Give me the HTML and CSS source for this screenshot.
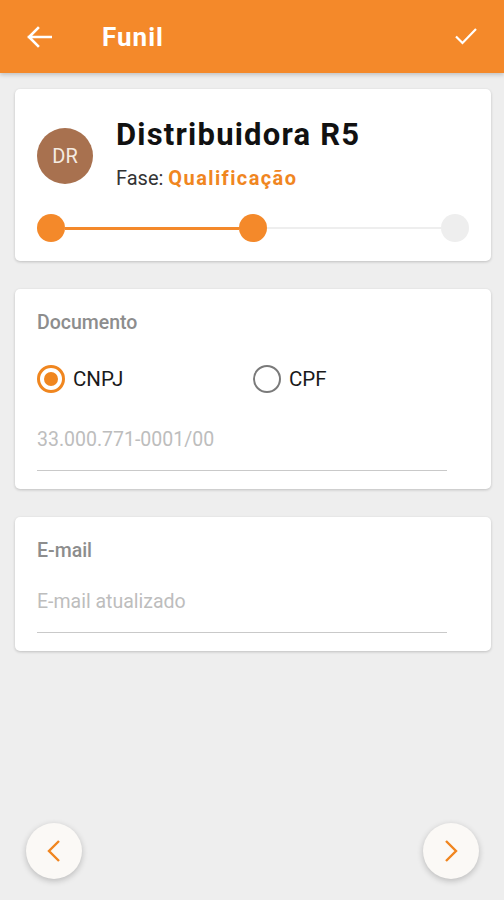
FILE: index.html
```html
<html lang="pt-BR">
  <head>
    <meta charset="UTF-8" />
    <meta name="viewport" content="width=device-width, initial-scale=1.0" />
    <title>Funil</title>
    <link rel="stylesheet" href="styles.css">
  </head>
  <body>
    <div class="screen">
      <header class="app-bar">
        <button class="bar-btn back-btn">
          <svg width="26" height="22" viewBox="0 0 26 22">
            <path d="M25 11H3M12 2L3 11l9 9" fill="none" stroke="#fff" stroke-width="2.6" stroke-linecap="square" />
          </svg>
        </button>
        <h1 class="bar-title">Funil</h1>
        <button class="bar-btn check-btn">
          <svg width="24" height="20" viewBox="0 0 24 20">
            <path d="M2 10.5l6.5 6.5L22 3" fill="none" stroke="#fff" stroke-width="2.2" />
          </svg>
        </button>
      </header>

      <main class="content">
        <section class="card lead-card">
          <div class="lead-head">
            <div class="avatar">DR</div>
            <div class="lead-info">
              <div class="lead-name">Distribuidora R5</div>
              <div class="lead-phase">Fase: <span class="phase-name">Qualificação</span></div>
            </div>
          </div>
          <div class="steps">
            <span class="step done"></span>
            <span class="step-line done"></span>
            <span class="step done"></span>
            <span class="step-line"></span>
            <span class="step"></span>
          </div>
        </section>

        <section class="card field-card">
          <div class="field-label">Documento</div>
          <div class="radio-group">
            <label class="radio-item">
              <span class="radio checked"></span>
              <span class="radio-text">CNPJ</span>
            </label>
            <label class="radio-item">
              <span class="radio"></span>
              <span class="radio-text">CPF</span>
            </label>
          </div>
          <div class="input doc-input">33.000.771-0001/00</div>
        </section>

        <section class="card field-card">
          <div class="field-label">E-mail</div>
          <div class="input mail-input">E-mail atualizado</div>
        </section>
      </main>

      <footer class="nav-footer">
        <button class="round-btn">
          <svg width="14" height="24" viewBox="0 0 14 24">
            <path d="M12 2L2 12l10 10" fill="none" stroke="#f0851f" stroke-width="2.4" />
          </svg>
        </button>
        <button class="round-btn">
          <svg width="14" height="24" viewBox="0 0 14 24">
            <path d="M2 2l10 10L2 22" fill="none" stroke="#f0851f" stroke-width="2.4" />
          </svg>
        </button>
      </footer>
    </div>
  </body>
</html>
```

FILE: styles.css
```css
body {
  margin: 0;
  background-color: #eeeeee;
  font-family: Roboto, "Liberation Sans", sans-serif;
}

.screen {
  min-height: 100vh;
  display: flex;
  flex-direction: column;
}

button {
  border: none;
  background: none;
  padding: 0;
  cursor: pointer;
}

/* top bar */
.app-bar {
  height: 73px;
  background-color: #f4892a;
  display: flex;
  align-items: center;
  padding: 0 26px 0 26px;
  box-shadow: 0 2px 4px rgba(0, 0, 0, 0.18);
}

.bar-btn {
  display: flex;
}

.back-btn {
  margin-top: 1px;
}

.bar-title {
  flex: 1;
  margin: 0 0 0 50px;
  color: #ffffff;
  font-size: 26px;
  font-weight: 700;
  letter-spacing: 1px;
}

.check-btn {
  margin-top: -1px;
}

/* cards */
.content {
  flex: 1;
  display: flex;
  flex-direction: column;
  gap: 28px;
  padding: 16px 13px 0 15px;
}

.card {
  background-color: #ffffff;
  border-radius: 5px;
  box-shadow: 0 1px 3px rgba(0, 0, 0, 0.2);
  padding: 22px 22px 18px;
}

.lead-card {
  padding-top: 29px;
  padding-bottom: 19px;
}

.lead-head {
  display: flex;
  align-items: center;
  gap: 23px;
}

.avatar {
  width: 56px;
  height: 56px;
  margin-top: 4px;
  border-radius: 50%;
  background-color: #a8714f;
  color: #f5ebe2;
  font-size: 20px;
  display: flex;
  align-items: center;
  justify-content: center;
}

.lead-name {
  font-size: 31px;
  line-height: 34px;
  font-weight: 700;
  letter-spacing: 1.2px;
  color: #111111;
}

.lead-phase {
  margin-top: 14px;
  font-size: 20px;
  line-height: 24px;
  color: #333333;
}

.phase-name {
  color: #f0861f;
  font-weight: 700;
  letter-spacing: 1.4px;
}

.steps {
  display: flex;
  align-items: center;
  margin-top: 24px;
}

.step {
  width: 28px;
  height: 28px;
  border-radius: 50%;
  background-color: #eeeeee;
}

.step.done {
  background-color: #f4892a;
}

.step-line {
  flex: 1;
  height: 2px;
  background-color: #eeeeee;
}

.step-line.done {
  height: 3px;
  background-color: #f4892a;
}

/* form fields */
.field-label {
  font-size: 19.5px;
  line-height: 24px;
  font-weight: 500;
  color: #8d8d8d;
}

.radio-group {
  display: grid;
  grid-template-columns: 1fr 1fr;
  margin-top: 30px;
}

.radio-item {
  display: flex;
  align-items: center;
  gap: 8px;
}

.radio {
  box-sizing: border-box;
  width: 28px;
  height: 28px;
  border-radius: 50%;
  border: 2.5px solid #7a7a7a;
  display: flex;
  align-items: center;
  justify-content: center;
}

.radio.checked {
  border: 3px solid #f0861f;
}

.radio.checked::after {
  content: "";
  width: 14px;
  height: 14px;
  border-radius: 50%;
  background-color: #f0861f;
}

.radio-text {
  font-size: 20.5px;
  line-height: 28px;
  color: #1a1a1a;
}

.input {
  margin-right: 22px;
  font-size: 19.5px;
  line-height: 24px;
  color: #bdbdbd;
  border-bottom: 1px solid #c9c9c9;
  padding-bottom: 18px;
}

.doc-input {
  margin-top: 35px;
}

.mail-input {
  margin-top: 27px;
}

/* bottom navigation */
.nav-footer {
  display: flex;
  justify-content: space-between;
  padding: 0 25px 21px 26px;
}

.round-btn {
  width: 56px;
  height: 56px;
  border-radius: 50%;
  background-color: #fbf9f6;
  box-shadow: 0 2px 6px rgba(0, 0, 0, 0.22);
  display: flex;
  align-items: center;
  justify-content: center;
}
```
